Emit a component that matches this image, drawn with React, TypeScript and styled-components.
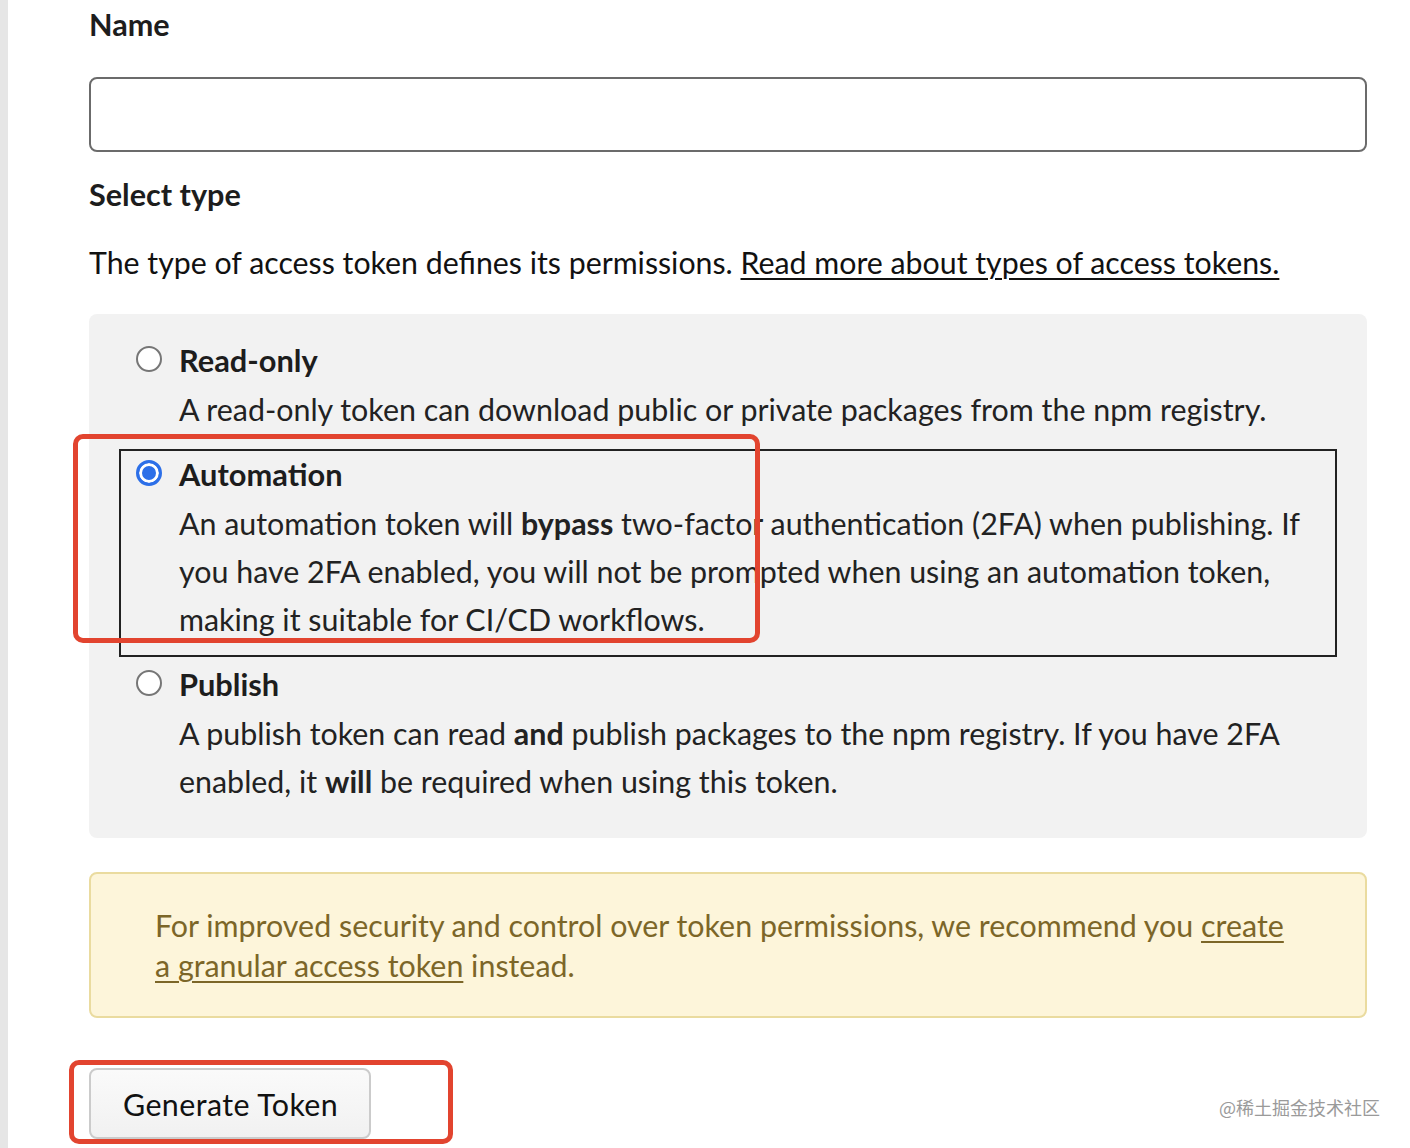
import React, { useState } from 'react';
import styled, { createGlobalStyle, css } from 'styled-components';

const GlobalStyle = createGlobalStyle`
  html, body {
    margin: 0;
    padding: 0;
    background: #ffffff;
  }
  body {
    font-family: Lato, "Noto Sans", "Liberation Sans", sans-serif;
    color: #111;
  }
`;

const Page = styled.div`
  position: relative;
  display: flex;
  width: 1410px;
  height: 1148px;
  overflow: hidden;
`;

const SideStrip = styled.div`
  flex-shrink: 0;
  width: 8px;
  background: #e6e6e6;
`;

const Content = styled.div`
  flex: 1;
  padding: 0 43px 0 81px;
`;

const FieldLabel = styled.label`
  display: block;
  font-size: 30.6px;
  font-weight: 700;
  line-height: 50px;
  color: #1d1d1d;
`;

const TextInput = styled.input`
  display: block;
  box-sizing: border-box;
  width: 100%;
  height: 75px;
  margin: 27px 0 18px;
  border: 2px solid #6b6b6b;
  border-radius: 8px;
  background: #fff;
  font: inherit;
  font-size: 30px;
  padding: 0 16px;
  outline: none;
`;

const Intro = styled.p`
  margin: 18px 0 28px;
  font-size: 30.3px;
  line-height: 48px;
  color: #111;
`;

const PlainLink = styled.a`
  color: #111;
  text-decoration: underline;
  text-underline-offset: 4px;
  text-decoration-thickness: 2px;
`;

const OptionsPanel = styled.div`
  display: flex;
  flex-direction: column;
  gap: 2px;
  padding: 21px 30px 19px;
  background: #f2f2f2;
  border-radius: 8px;
`;

const OptionItem = styled.label<{ selected?: boolean }>`
  display: grid;
  grid-template-columns: 26px 1fr;
  column-gap: 17px;
  padding: 0 20px 12px 15px;
  border: 2px solid transparent;
  cursor: pointer;

  ${(p) => p.selected && css`
    border-color: #222;
  `}
`;

const RadioDot = styled.span<{ checked?: boolean }>`
  box-sizing: border-box;
  width: 26px;
  height: 26px;
  margin-top: 9px;
  border-radius: 50%;
  border: 2px solid #767676;
  background: #fff;

  ${(p) => p.checked && css`
    border: 3px solid #2c6fe8;
    box-shadow: inset 0 0 0 3px #fff;
    background: #2c6fe8;
  `}
`;

const OptionText = styled.div`
  font-size: 30.4px;
  line-height: 48px;
  color: #222;
`;

const OptionTitle = styled.div`
  font-weight: 700;
  font-size: 30.8px;
  color: #1d1d1d;
`;

const Notice = styled.div`
  margin-top: 34px;
  padding: 31px 64px;
  background: #fdf5da;
  border: 2px solid #eadb9f;
  border-radius: 8px;
  font-size: 30.4px;
  line-height: 40px;
  color: #7c6628;
`;

const NoticeLink = styled.a`
  color: #7c6628;
  text-decoration: underline;
  text-underline-offset: 4px;
  text-decoration-thickness: 2px;
`;

const GenerateButton = styled.button`
  box-sizing: border-box;
  display: block;
  width: 282px;
  height: 71px;
  margin-top: 50px;
  padding: 0 0 0 32px;
  text-align: left;
  border: 2px solid #cbcbcb;
  border-radius: 8px;
  background: linear-gradient(#fafafa, #f1f1f1);
  font-family: inherit;
  font-size: 30.4px;
  color: #111;
  letter-spacing: 0.4px;
`;

const Annotation = styled.div`
  position: absolute;
  box-sizing: border-box;
  border: 5px solid #e2442f;
  border-radius: 10px;
  pointer-events: none;
`;

const Watermark = styled.div`
  position: absolute;
  right: 30px;
  bottom: 28px;
  font-family: "Noto Sans CJK SC", sans-serif;
  font-size: 18px;
  color: #9a9a9a;
  text-shadow: 0 0 2px #fff;
`;

type TokenType = 'read-only' | 'automation' | 'publish';

const options: { key: TokenType; title: string; body: React.ReactNode }[] = [
  {
    key: 'read-only',
    title: 'Read-only',
    body: 'A read-only token can download public or private packages from the npm registry.',
  },
  {
    key: 'automation',
    title: 'Automation',
    body: (
      <>
        An automation token will <b>bypass</b> two-factor authentication (2FA) when publishing. If you have 2FA enabled, you will not be prompted when using an automation token, making it suitable for CI/CD workflows.
      </>
    ),
  },
  {
    key: 'publish',
    title: 'Publish',
    body: (
      <>
        A publish token can read <b>and</b> publish packages to the npm registry. If you have 2FA enabled, it <b>will</b> be required when using this token.
      </>
    ),
  },
];

export default function App() {
  const [selected, setSelected] = useState<TokenType>('automation');

  return (
    <Page>
      <GlobalStyle />
      <SideStrip />
      <Content>
        <FieldLabel htmlFor="token-name">Name</FieldLabel>
        <TextInput id="token-name" type="text" />
        <FieldLabel as="div">Select type</FieldLabel>
        <Intro>
          The type of access token defines its permissions.{' '}
          <PlainLink href="#">Read more about types of access tokens.</PlainLink>
        </Intro>
        <OptionsPanel>
          {options.map((o) => (
            <OptionItem key={o.key} selected={selected === o.key} onClick={() => setSelected(o.key)}>
              <RadioDot checked={selected === o.key} />
              <OptionText>
                <OptionTitle>{o.title}</OptionTitle>
                <div>{o.body}</div>
              </OptionText>
            </OptionItem>
          ))}
        </OptionsPanel>
        <Notice>
          For improved security and control over token permissions, we recommend you{' '}
          <NoticeLink href="#">create a granular access token</NoticeLink> instead.
        </Notice>
        <GenerateButton>Generate Token</GenerateButton>
      </Content>
      <Annotation style={{ left: 73, top: 434, width: 687, height: 209 }} />
      <Annotation style={{ left: 69, top: 1060, width: 384, height: 84 }} />
      <Watermark>@稀土掘金技术社区</Watermark>
    </Page>
  );
}
